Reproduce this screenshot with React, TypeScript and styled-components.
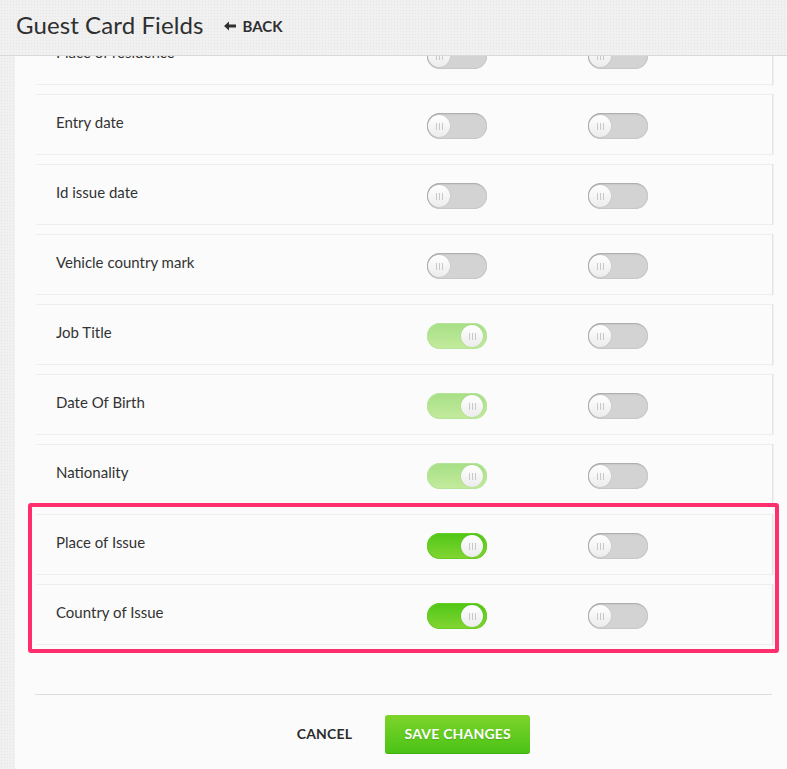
import React from 'react';
import styled, { createGlobalStyle, css } from 'styled-components';

const texture = css`
  background-color: #efefef;
  background-image: radial-gradient(rgba(0, 0, 0, 0.035) 0.6px, transparent 0.8px),
    radial-gradient(rgba(255, 255, 255, 0.6) 0.6px, transparent 0.8px);
  background-size: 3px 3px, 3px 3px;
  background-position: 0 0, 1.5px 1.5px;
`;

const GlobalStyle = createGlobalStyle`
  html, body {
    margin: 0;
    padding: 0;
  }
  body {
    font-family: Lato, "Open Sans", sans-serif;
    color: #333;
    ${texture}
  }
`;

const Page = styled.div`
  height: 769px;
  display: flex;
  flex-direction: column;
  overflow: hidden;
`;

const Header = styled.header`
  height: 56px;
  box-sizing: border-box;
  flex-shrink: 0;
  display: flex;
  align-items: center;
  gap: 20px;
  padding: 0 0 6px 16px;
  border-bottom: 1px solid #d9d9d9;
  position: relative;
  z-index: 2;
  ${texture}
`;

const Title = styled.h1`
  margin: 0;
  font-size: 24px;
  font-weight: 400;
  color: #2f2f2f;
  letter-spacing: 0.1px;
`;

const BackLink = styled.a`
  display: flex;
  align-items: center;
  gap: 7px;
  font-size: 15px;
  font-weight: 700;
  color: #2f2f2f;
  text-transform: uppercase;
  text-decoration: none;
  margin-top: 2px;
`;

const Panel = styled.main`
  flex: 1;
  margin-left: 15px;
  background: #fbfbfb;
  overflow: hidden;
  display: flex;
  flex-direction: column;
`;

const List = styled.div`
  display: flex;
  flex-direction: column;
  gap: 9px;
  margin-top: -32px;
  padding: 0 15px 0 21px;
`;

const Group = styled.div`
  position: relative;
  display: flex;
  flex-direction: column;
  gap: 9px;
`;

const Highlight = styled.div`
  position: absolute;
  top: -11px;
  bottom: -8px;
  left: -8px;
  right: -7px;
  border: 4px solid #ff2f6d;
  border-radius: 3px;
  pointer-events: none;
`;

const Row = styled.div`
  height: 61px;
  box-sizing: border-box;
  display: grid;
  grid-template-columns: 371px 161px 1fr;
  align-items: center;
  padding-left: 20px;
  background: #fbfbfb;
  border-top: 1px solid #eeeeee;
  border-bottom: 1px solid #eeeeee;
  box-shadow: 1px 0 0 #e4e4e4, 2px 0 1px rgba(0, 0, 0, 0.04);
`;

const Label = styled.span`
  font-size: 15px;
  color: #333;
  margin-bottom: 5px;
`;

const Track = styled.div<{ $on?: boolean; $muted?: boolean }>`
  position: relative;
  width: 60px;
  height: 26px;
  margin-top: 3px;
  border-radius: 13px;
  box-sizing: border-box;
  background: #d3d3d3;
  box-shadow: inset 1px 1px 2px rgba(0, 0, 0, 0.18), inset 0 0 0 1px #c9c9c9;
  ${({ $on, $muted }) =>
    $on &&
    ($muted
      ? css`
          background: linear-gradient(#a6df86, #c4eb9c);
          box-shadow: inset 0 0 0 1px #b5e59a;
        `
      : css`
          background: linear-gradient(#4fc716, #84d532);
          box-shadow: inset 0 0 0 1px #67cd24;
        `)}
`;

const Knob = styled.span<{ $on?: boolean }>`
  position: absolute;
  top: 2px;
  left: ${({ $on }) => ($on ? '34px' : '1px')};
  width: 22px;
  height: 22px;
  border-radius: 50%;
  background: linear-gradient(#ffffff, #ececec);
  box-shadow: 0 0 1px rgba(0, 0, 0, 0.25);
  display: flex;
  align-items: center;
  justify-content: center;
  gap: 2px;

  & > i {
    display: block;
    width: 1px;
    height: 7px;
    background: #c8c8c8;
  }
`;

const Footer = styled.footer`
  margin: 49px 15px 0 20px;
  border-top: 1px solid #dedede;
  padding-top: 20px;
  display: flex;
  justify-content: center;
  gap: 13px;
`;

const CancelButton = styled.button`
  border: none;
  background: none;
  padding: 0 20px 2px;
  height: 39px;
  font-family: inherit;
  font-size: 14px;
  font-weight: 700;
  color: #2c2c2c;
  letter-spacing: 0.2px;
  cursor: pointer;
`;

const SaveButton = styled.button`
  width: 145px;
  height: 39px;
  padding-bottom: 2px;
  border: none;
  border-bottom: 1px solid #3fae12;
  border-radius: 3px;
  background: linear-gradient(#7dd42a, #4bc316);
  color: #fff;
  font-family: inherit;
  font-size: 14px;
  font-weight: 700;
  letter-spacing: 0.2px;
  text-shadow: 0 1px 1px rgba(0, 0, 0, 0.15);
  cursor: pointer;
`;

type Field = { label: string; first: 'off' | 'muted' | 'on' };

const fields: Field[] = [
  { label: 'Place of residence', first: 'off' },
  { label: 'Entry date', first: 'off' },
  { label: 'Id issue date', first: 'off' },
  { label: 'Vehicle country mark', first: 'off' },
  { label: 'Job Title', first: 'muted' },
  { label: 'Date Of Birth', first: 'muted' },
  { label: 'Nationality', first: 'muted' },
];

const highlighted: Field[] = [
  { label: 'Place of Issue', first: 'on' },
  { label: 'Country of Issue', first: 'on' },
];

const Toggle = ({ on, muted }: { on?: boolean; muted?: boolean }) => (
  <Track $on={on} $muted={muted}>
    <Knob $on={on}>
      <i />
      <i />
      <i />
    </Knob>
  </Track>
);

const FieldRow = ({ field }: { field: Field }) => (
  <Row>
    <Label>{field.label}</Label>
    <Toggle on={field.first !== 'off'} muted={field.first === 'muted'} />
    <Toggle />
  </Row>
);

const ArrowLeft = () => (
  <svg width="12" height="10" viewBox="0 0 12 10">
    <path d="M0 5 L5 0.5 L5 3.6 L12 3.6 L12 6.4 L5 6.4 L5 9.5 Z" fill="#2f2f2f" />
  </svg>
);

const App = () => (
  <>
    <GlobalStyle />
    <Page>
      <Header>
        <Title>Guest Card Fields</Title>
        <BackLink href="#">
          <ArrowLeft />
          Back
        </BackLink>
      </Header>
      <Panel>
        <List>
          {fields.map((f) => (
            <FieldRow key={f.label} field={f} />
          ))}
          <Group>
            {highlighted.map((f) => (
              <FieldRow key={f.label} field={f} />
            ))}
            <Highlight />
          </Group>
        </List>
        <Footer>
          <CancelButton>CANCEL</CancelButton>
          <SaveButton>SAVE CHANGES</SaveButton>
        </Footer>
      </Panel>
    </Page>
  </>
);

export default App;
